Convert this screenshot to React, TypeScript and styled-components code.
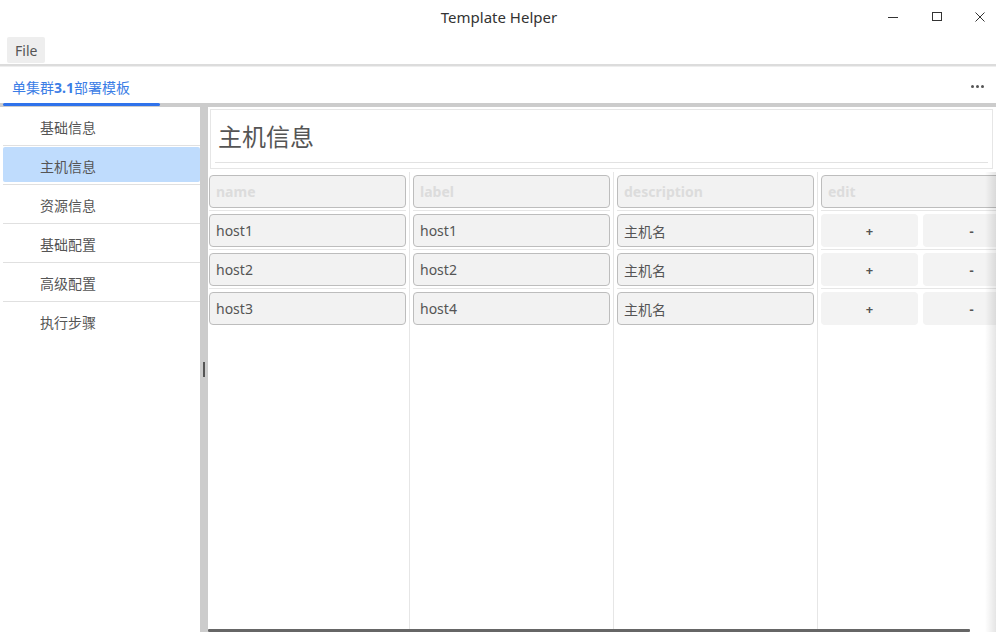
import React from "react";
import styled, { createGlobalStyle } from "styled-components";

const GlobalStyle = createGlobalStyle`
  html, body { margin: 0; padding: 0; background: #fff; }
  body { font-family: "Noto Sans", "Noto Sans CJK SC", sans-serif; color: #555; }
  * { box-sizing: border-box; }
`;

const Window = styled.div`
  width: 996px;
  height: 637px;
  display: flex;
  flex-direction: column;
  background: #fff;
  overflow: hidden;
`;

const TitleBar = styled.div`
  height: 36px;
  flex: none;
  position: relative;
  display: flex;
  align-items: center;
  justify-content: center;
  padding-bottom: 2px;
`;

const Title = styled.div`
  font-size: 15px;
  color: #333;
  margin-left: 2px;
`;

const Controls = styled.div`
  position: absolute;
  right: -6px;
  top: 0;
  height: 34px;
  display: flex;
  align-items: center;
`;

const ControlButton = styled.div`
  width: 43.5px;
  height: 34px;
  display: flex;
  align-items: center;
  justify-content: center;
  color: #333;
`;

const MenuBar = styled.div`
  height: 30px;
  flex: none;
  padding: 1px 7px 0;
  border-bottom: 2px solid #dcdcdc;
  box-shadow: 0 1px 0 #eee;
  display: flex;
  align-items: flex-start;
`;

const MenuButton = styled.div`
  height: 26px;
  padding: 0 8px;
  background: #eee;
  border-radius: 2px;
  font-size: 14px;
  color: #555;
  display: flex;
  align-items: center;
`;

const TabBar = styled.div`
  height: 37px;
  flex: none;
  display: flex;
  align-items: center;
  justify-content: space-between;
  padding: 4px 12px 0 12px;
`;

const TabLabel = styled.div`
  font-size: 14px;
  color: #3b7de6;
  b { font-weight: 700; }
`;

const More = styled.div`
  display: flex;
  gap: 2px;
  span {
    width: 3px;
    height: 3px;
    border-radius: 50%;
    background: #555;
  }
`;

const Track = styled.div`
  height: 4px;
  flex: none;
  background: #cccccc;
  padding-left: 3px;
`;

const Indicator = styled.div`
  width: 157px;
  height: 3px;
  border-radius: 2px;
  background: #2f72eb;
`;

const Body = styled.div`
  height: 525px;
  flex: none;
  display: flex;
`;

const Sidebar = styled.div`
  width: 197px;
  margin-left: 3px;
  flex: none;
  display: flex;
  flex-direction: column;
`;

const NavItem = styled.div`
  height: 39px;
  flex: none;
  border-bottom: 1px solid #e0e0e0;
  &:last-child { border-bottom: none; }
`;

const NavLabel = styled.div<{ $active?: boolean }>`
  height: 35px;
  margin-top: 1px;
  padding-left: 37px;
  padding-top: 2px;
  display: flex;
  align-items: center;
  font-size: 14px;
  color: #555;
  border-radius: 2px;
  background: ${(p) => (p.$active ? "#bfdcfd" : "transparent")};
`;

const Splitter = styled.div`
  width: 8px;
  flex: none;
  background: #cccccc;
  display: flex;
  align-items: center;
  justify-content: center;
  padding-right: 1px;
`;

const Handle = styled.div`
  width: 2px;
  height: 15px;
  background: #555;
`;

const Main = styled.div`
  flex: 1;
  min-width: 0;
  position: relative;
  overflow: hidden;
  display: flex;
  flex-direction: column;
`;

const HeadingBox = styled.div`
  margin: 2px 3px 0 2px;
  height: 60px;
  flex: none;
  border: 1px solid #e6e6e6;
  padding: 0 4px;
`;

const Heading = styled.h1`
  margin: 0;
  height: 53px;
  border-bottom: 1px solid #e2e2e2;
  padding: 0 0 2px 3px;
  display: flex;
  align-items: center;
  font-size: 24px;
  font-weight: 400;
  color: #555;
`;

const TableArea = styled.div`
  flex: 1;
  margin-top: 3px;
  position: relative;
  display: flex;
`;

const Column = styled.div<{ $w: number; $first?: boolean }>`
  width: ${(p) => p.$w}px;
  flex: none;
  border-right: 1px solid #e6e6e6;
  display: flex;
  flex-direction: column;
  padding-left: ${(p) => (p.$first ? 1 : 3)}px;
  padding-right: 3px;
`;

const Cell = styled.div`
  height: 39px;
  flex: none;
  padding: 3px 0 2px;
  border-bottom: 1px solid #e6e6e6;
  display: flex;
  gap: 5px;
  &:last-child { border-bottom: none; }
`;

const Field = styled.div<{ $placeholder?: boolean }>`
  flex: 1;
  height: 33px;
  border: 1px solid #bdbdbd;
  border-radius: 4px;
  background: #f2f2f2;
  padding: 0 7px 0 6px;
  display: flex;
  align-items: center;
  font-size: 14px;
  color: ${(p) => (p.$placeholder ? "#dcdcdc" : "#555")};
  font-weight: ${(p) => (p.$placeholder ? 700 : 400)};
  white-space: nowrap;
  overflow: hidden;
`;

const CellButton = styled.div`
  width: 97px;
  height: 33px;
  flex: none;
  border-radius: 4px;
  background: #f3f3f3;
  display: flex;
  align-items: center;
  justify-content: center;
  font-size: 13px;
  font-weight: 700;
  color: #555;
`;

const RightShadow = styled.div`
  position: absolute;
  right: 0;
  top: 0;
  bottom: 0;
  width: 11px;
  background: linear-gradient(to right, rgba(0, 0, 0, 0), rgba(0, 0, 0, 0.1));
  pointer-events: none;
`;

const ScrollThumb = styled.div`
  position: absolute;
  left: 0;
  bottom: 0;
  width: 762px;
  height: 3px;
  border-radius: 1px;
  background: #666;
`;

const rows = [
  { name: "host1", label: "host1", desc: "主机名" },
  { name: "host2", label: "host2", desc: "主机名" },
  { name: "host3", label: "host4", desc: "主机名" },
];

const nav = ["基础信息", "主机信息", "资源信息", "基础配置", "高级配置", "执行步骤"];

export default function App() {
  return (
    <>
      <GlobalStyle />
      <Window>
        <TitleBar>
          <Title>Template Helper</Title>
          <Controls>
            <ControlButton>
              <svg width="12" height="12" viewBox="0 0 12 12">
                <line x1="1" y1="6.5" x2="11" y2="6.5" stroke="#333" strokeWidth="1" />
              </svg>
            </ControlButton>
            <ControlButton>
              <svg width="12" height="12" viewBox="0 0 12 12">
                <rect x="1.5" y="1.5" width="9" height="8" fill="none" stroke="#333" strokeWidth="1" />
              </svg>
            </ControlButton>
            <ControlButton>
              <svg width="12" height="12" viewBox="0 0 12 12">
                <path d="M1.5 1.5 L10.5 10.5 M10.5 1.5 L1.5 10.5" stroke="#333" strokeWidth="1" />
              </svg>
            </ControlButton>
          </Controls>
        </TitleBar>
        <MenuBar>
          <MenuButton>File</MenuButton>
        </MenuBar>
        <TabBar>
          <TabLabel>
            单集群<b>3.1</b>部署模板
          </TabLabel>
          <More>
            <span />
            <span />
            <span />
          </More>
        </TabBar>
        <Track>
          <Indicator />
        </Track>
        <Body>
          <Sidebar>
            {nav.map((n, i) => (
              <NavItem key={n}>
                <NavLabel $active={i === 1}>{n}</NavLabel>
              </NavItem>
            ))}
          </Sidebar>
          <Splitter>
            <Handle />
          </Splitter>
          <Main>
            <HeadingBox>
              <Heading>主机信息</Heading>
            </HeadingBox>
            <TableArea>
              <Column $w={202} $first>
                <Cell>
                  <Field $placeholder>name</Field>
                </Cell>
                {rows.map((r, i) => (
                  <Cell key={i}>
                    <Field>{r.name}</Field>
                  </Cell>
                ))}
              </Column>
              <Column $w={204}>
                <Cell>
                  <Field $placeholder>label</Field>
                </Cell>
                {rows.map((r, i) => (
                  <Cell key={i}>
                    <Field>{r.label}</Field>
                  </Cell>
                ))}
              </Column>
              <Column $w={204}>
                <Cell>
                  <Field $placeholder>description</Field>
                </Cell>
                {rows.map((r, i) => (
                  <Cell key={i}>
                    <Field>{r.desc}</Field>
                  </Cell>
                ))}
              </Column>
              <Column $w={206}>
                <Cell>
                  <Field $placeholder>edit</Field>
                </Cell>
                {rows.map((_, i) => (
                  <Cell key={i}>
                    <CellButton>+</CellButton>
                    <CellButton>-</CellButton>
                  </Cell>
                ))}
              </Column>
              <RightShadow />
            </TableArea>
            <ScrollThumb />
          </Main>
        </Body>
      </Window>
    </>
  );
}
